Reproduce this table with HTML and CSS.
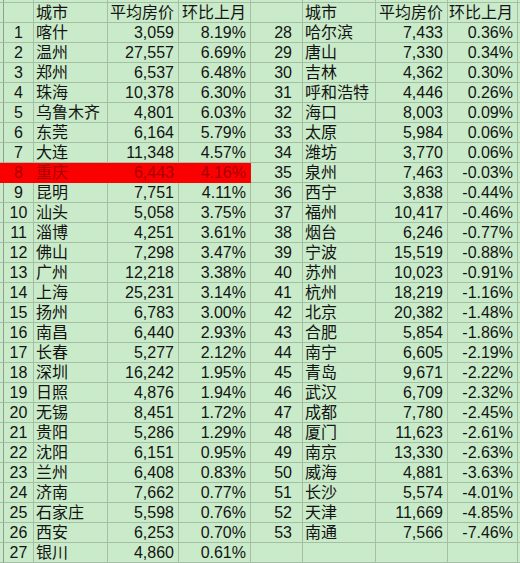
FILE: index.html
```
<!DOCTYPE html>
<html lang="zh-CN">
<head>
<meta charset="utf-8">
<title>城市平均房价</title>
<link rel="stylesheet" href="styles.css">
</head>
<body>
<div class="sheet">
<div class="row top"><span class="c e"></span><span class="c"></span><span class="c"></span><span class="c"></span><span class="c"></span><span class="c"></span><span class="c"></span><span class="c"></span><span class="c"></span><span class="c z"></span></div>
<div class="row"><span class="c e"></span><span class="c i"></span><span class="c t">城市</span><span class="c n">平均房价</span><span class="c n">环比上月</span><span class="c j"></span><span class="c t">城市</span><span class="c n">平均房价</span><span class="c n">环比上月</span><span class="c z"></span></div>
<div class="row"><span class="c e"></span><span class="c i">1</span><span class="c t">喀什</span><span class="c n">3,059</span><span class="c n">8.19%</span><span class="c j">28</span><span class="c t">哈尔滨</span><span class="c n">7,433</span><span class="c n">0.36%</span><span class="c z"></span></div>
<div class="row"><span class="c e"></span><span class="c i">2</span><span class="c t">温州</span><span class="c n">27,557</span><span class="c n">6.69%</span><span class="c j">29</span><span class="c t">唐山</span><span class="c n">7,330</span><span class="c n">0.34%</span><span class="c z"></span></div>
<div class="row"><span class="c e"></span><span class="c i">3</span><span class="c t">郑州</span><span class="c n">6,537</span><span class="c n">6.48%</span><span class="c j">30</span><span class="c t">吉林</span><span class="c n">4,362</span><span class="c n">0.30%</span><span class="c z"></span></div>
<div class="row"><span class="c e"></span><span class="c i">4</span><span class="c t">珠海</span><span class="c n">10,378</span><span class="c n">6.30%</span><span class="c j">31</span><span class="c t">呼和浩特</span><span class="c n">4,446</span><span class="c n">0.26%</span><span class="c z"></span></div>
<div class="row"><span class="c e"></span><span class="c i">5</span><span class="c t">乌鲁木齐</span><span class="c n">4,801</span><span class="c n">6.03%</span><span class="c j">32</span><span class="c t">海口</span><span class="c n">8,003</span><span class="c n">0.09%</span><span class="c z"></span></div>
<div class="row"><span class="c e"></span><span class="c i">6</span><span class="c t">东莞</span><span class="c n">6,164</span><span class="c n">5.79%</span><span class="c j">33</span><span class="c t">太原</span><span class="c n">5,984</span><span class="c n">0.06%</span><span class="c z"></span></div>
<div class="row"><span class="c e"></span><span class="c i">7</span><span class="c t">大连</span><span class="c n">11,348</span><span class="c n">4.57%</span><span class="c j">34</span><span class="c t">潍坊</span><span class="c n">3,770</span><span class="c n">0.06%</span><span class="c z"></span></div>
<div class="row"><span class="c e hot"></span><span class="c i hot">8</span><span class="c t hot">重庆</span><span class="c n hot">6,443</span><span class="c n hot">4.16%</span><span class="c j">35</span><span class="c t">泉州</span><span class="c n">7,463</span><span class="c n">-0.03%</span><span class="c z"></span></div>
<div class="row"><span class="c e"></span><span class="c i">9</span><span class="c t">昆明</span><span class="c n">7,751</span><span class="c n">4.11%</span><span class="c j">36</span><span class="c t">西宁</span><span class="c n">3,838</span><span class="c n">-0.44%</span><span class="c z"></span></div>
<div class="row"><span class="c e"></span><span class="c i">10</span><span class="c t">汕头</span><span class="c n">5,058</span><span class="c n">3.75%</span><span class="c j">37</span><span class="c t">福州</span><span class="c n">10,417</span><span class="c n">-0.46%</span><span class="c z"></span></div>
<div class="row"><span class="c e"></span><span class="c i">11</span><span class="c t">淄博</span><span class="c n">4,251</span><span class="c n">3.61%</span><span class="c j">38</span><span class="c t">烟台</span><span class="c n">6,246</span><span class="c n">-0.77%</span><span class="c z"></span></div>
<div class="row"><span class="c e"></span><span class="c i">12</span><span class="c t">佛山</span><span class="c n">7,298</span><span class="c n">3.47%</span><span class="c j">39</span><span class="c t">宁波</span><span class="c n">15,519</span><span class="c n">-0.88%</span><span class="c z"></span></div>
<div class="row"><span class="c e"></span><span class="c i">13</span><span class="c t">广州</span><span class="c n">12,218</span><span class="c n">3.38%</span><span class="c j">40</span><span class="c t">苏州</span><span class="c n">10,023</span><span class="c n">-0.91%</span><span class="c z"></span></div>
<div class="row"><span class="c e"></span><span class="c i">14</span><span class="c t">上海</span><span class="c n">25,231</span><span class="c n">3.14%</span><span class="c j">41</span><span class="c t">杭州</span><span class="c n">18,219</span><span class="c n">-1.16%</span><span class="c z"></span></div>
<div class="row"><span class="c e"></span><span class="c i">15</span><span class="c t">扬州</span><span class="c n">6,783</span><span class="c n">3.00%</span><span class="c j">42</span><span class="c t">北京</span><span class="c n">20,382</span><span class="c n">-1.48%</span><span class="c z"></span></div>
<div class="row"><span class="c e"></span><span class="c i">16</span><span class="c t">南昌</span><span class="c n">6,440</span><span class="c n">2.93%</span><span class="c j">43</span><span class="c t">合肥</span><span class="c n">5,854</span><span class="c n">-1.86%</span><span class="c z"></span></div>
<div class="row"><span class="c e"></span><span class="c i">17</span><span class="c t">长春</span><span class="c n">5,277</span><span class="c n">2.12%</span><span class="c j">44</span><span class="c t">南宁</span><span class="c n">6,605</span><span class="c n">-2.19%</span><span class="c z"></span></div>
<div class="row"><span class="c e"></span><span class="c i">18</span><span class="c t">深圳</span><span class="c n">16,242</span><span class="c n">1.95%</span><span class="c j">45</span><span class="c t">青岛</span><span class="c n">9,671</span><span class="c n">-2.22%</span><span class="c z"></span></div>
<div class="row"><span class="c e"></span><span class="c i">19</span><span class="c t">日照</span><span class="c n">4,876</span><span class="c n">1.94%</span><span class="c j">46</span><span class="c t">武汉</span><span class="c n">6,709</span><span class="c n">-2.32%</span><span class="c z"></span></div>
<div class="row"><span class="c e"></span><span class="c i">20</span><span class="c t">无锡</span><span class="c n">8,451</span><span class="c n">1.72%</span><span class="c j">47</span><span class="c t">成都</span><span class="c n">7,780</span><span class="c n">-2.45%</span><span class="c z"></span></div>
<div class="row"><span class="c e"></span><span class="c i">21</span><span class="c t">贵阳</span><span class="c n">5,286</span><span class="c n">1.29%</span><span class="c j">48</span><span class="c t">厦门</span><span class="c n">11,623</span><span class="c n">-2.61%</span><span class="c z"></span></div>
<div class="row"><span class="c e"></span><span class="c i">22</span><span class="c t">沈阳</span><span class="c n">6,151</span><span class="c n">0.95%</span><span class="c j">49</span><span class="c t">南京</span><span class="c n">13,330</span><span class="c n">-2.63%</span><span class="c z"></span></div>
<div class="row"><span class="c e"></span><span class="c i">23</span><span class="c t">兰州</span><span class="c n">6,408</span><span class="c n">0.83%</span><span class="c j">50</span><span class="c t">威海</span><span class="c n">4,881</span><span class="c n">-3.63%</span><span class="c z"></span></div>
<div class="row"><span class="c e"></span><span class="c i">24</span><span class="c t">济南</span><span class="c n">7,662</span><span class="c n">0.77%</span><span class="c j">51</span><span class="c t">长沙</span><span class="c n">5,574</span><span class="c n">-4.01%</span><span class="c z"></span></div>
<div class="row"><span class="c e"></span><span class="c i">25</span><span class="c t">石家庄</span><span class="c n">5,598</span><span class="c n">0.76%</span><span class="c j">52</span><span class="c t">天津</span><span class="c n">11,669</span><span class="c n">-4.85%</span><span class="c z"></span></div>
<div class="row"><span class="c e"></span><span class="c i">26</span><span class="c t">西安</span><span class="c n">6,253</span><span class="c n">0.70%</span><span class="c j">53</span><span class="c t">南通</span><span class="c n">7,566</span><span class="c n">-7.46%</span><span class="c z"></span></div>
<div class="row"><span class="c e"></span><span class="c i">27</span><span class="c t">银川</span><span class="c n">4,860</span><span class="c n">0.61%</span><span class="c j"></span><span class="c t"></span><span class="c n"></span><span class="c n"></span><span class="c z"></span></div>
</div>
</body>
</html>
```
FILE: styles.css
```
html, body {
  margin: 0;
  padding: 0;
  background: #c9ebc9;
}
body {
  font-family: "Liberation Sans", "Noto Sans CJK SC", sans-serif;
  font-size: 16px;
  line-height: 19px;
  color: #141414;
}
.sheet {
  width: 520px;
  height: 563px;
  overflow: hidden;
}
.row {
  display: grid;
  grid-template-columns: 4px 30px 74px 71px 72px 52px 73px 72px 70px 2px;
  height: 20px;
}
.row.top {
  height: 3px;
}
.c {
  box-sizing: border-box;
  border-right: 1px solid #a4bfa4;
  border-bottom: 1px solid #a4bfa4;
  white-space: nowrap;
  overflow: hidden;
}
.e {
  border-right-color: #8f9f8f;
}
.z {
  border-right: none;
}
.i {
  text-align: center;
}
.j {
  text-align: right;
  padding-right: 10px;
}
.t {
  padding-left: 2px;
}
.n {
  text-align: right;
  padding-right: 4px;
}
.hot {
  background: #fb0000;
  color: #a80000;
  border-color: #fb0000;
}
```
